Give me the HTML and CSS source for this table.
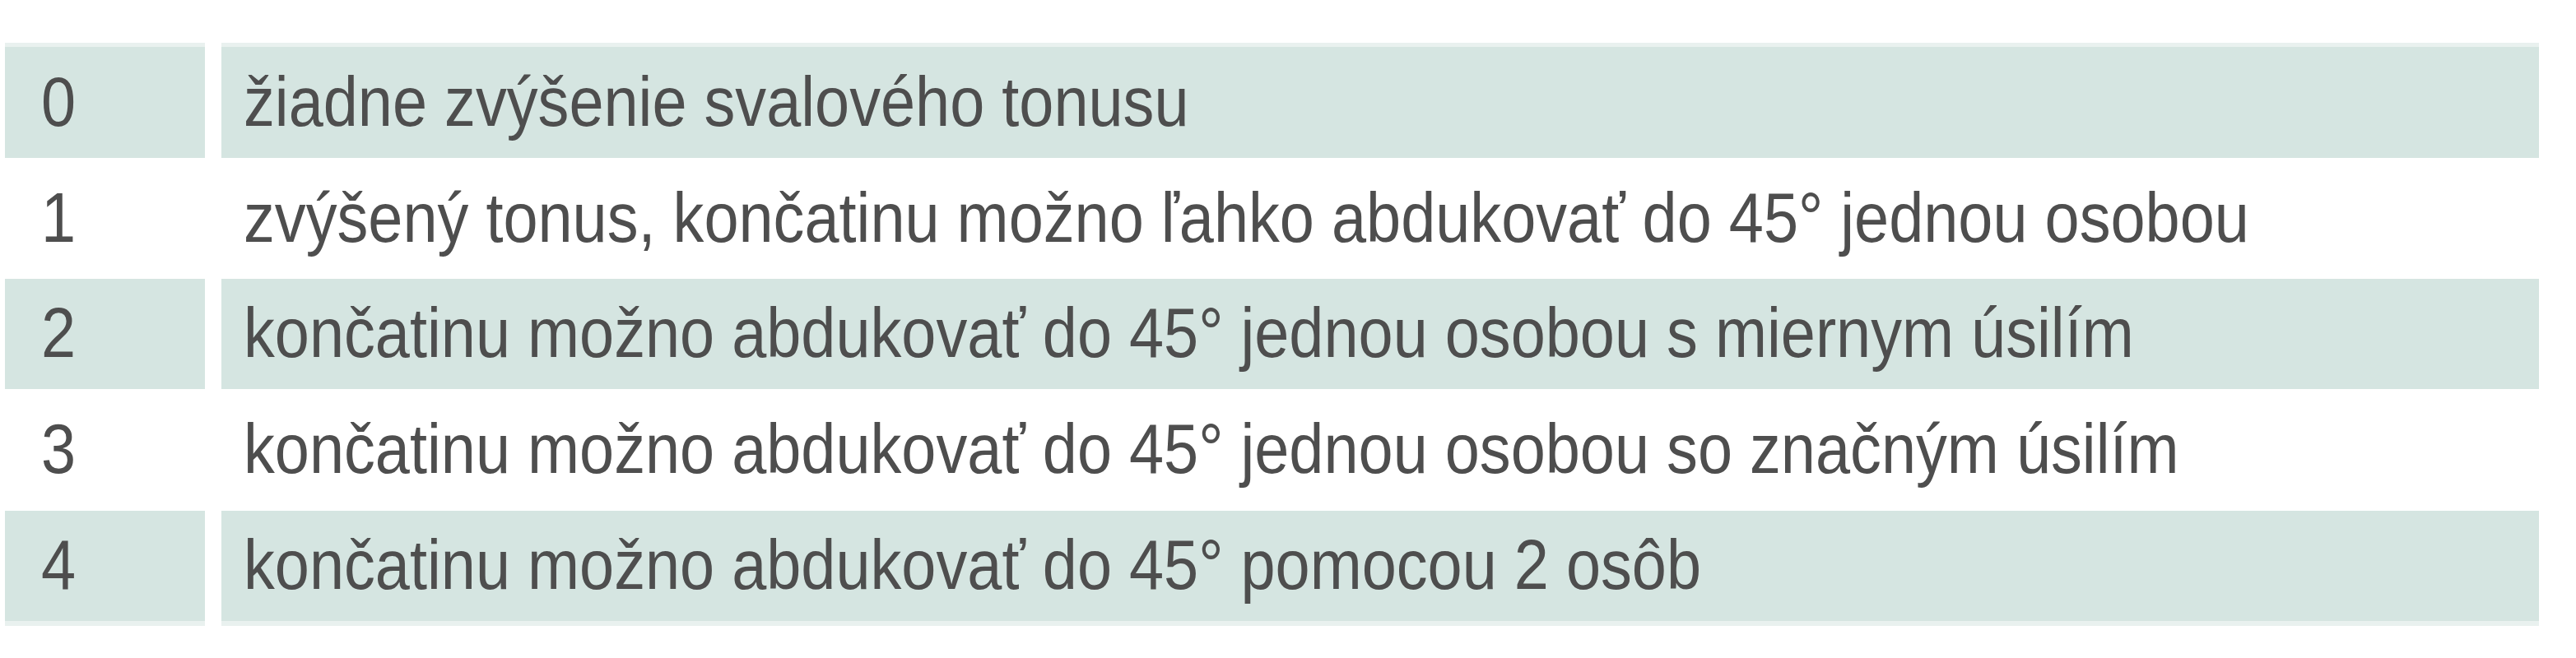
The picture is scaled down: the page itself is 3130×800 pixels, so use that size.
FILE: index.html
```html
<!DOCTYPE html>
<html lang="sk">
<head>
<meta charset="utf-8">
<title>Stupnica</title>
<link rel="stylesheet" href="styles.css">
</head>
<body>
<div class="scale">
  <div class="cell num shade first"><span class="t">0</span></div>
  <div class="cell desc shade first"><span class="t">žiadne zvýšenie svalového tonusu</span></div>
  <div class="cell num"><span class="t">1</span></div>
  <div class="cell desc"><span class="t">zvýšený tonus, končatinu možno ľahko abdukovať do 45° jednou osobou</span></div>
  <div class="cell num shade"><span class="t">2</span></div>
  <div class="cell desc shade"><span class="t">končatinu možno abdukovať do 45° jednou osobou s miernym úsilím</span></div>
  <div class="cell num"><span class="t">3</span></div>
  <div class="cell desc"><span class="t">končatinu možno abdukovať do 45° jednou osobou so značným úsilím</span></div>
  <div class="cell num shade last"><span class="t">4</span></div>
  <div class="cell desc shade last"><span class="t">končatinu možno abdukovať do 45° pomocou 2 osôb</span></div>
</div>
</body>
</html>
```

FILE: styles.css
```css
html, body {
  background: #ffffff;
}
body {
  margin: 52px 0 0 6px;
  font-family: "Liberation Sans", Arial, sans-serif;
  color: #4e4e4e;
}
.scale {
  display: grid;
  grid-template-columns: 243px 2816px;
  grid-template-rows: 140px 147px 134px 148px 140px;
  column-gap: 20px;
}
.cell {
  display: flex;
  align-items: center;
  font-size: 86px;
  line-height: 1;
  padding-bottom: 4px;
  white-space: nowrap;
  box-sizing: border-box;
}
.t {
  display: inline-block;
  transform: scaleX(0.88);
  transform-origin: 0 50%;
}
.num {
  padding-left: 44px;
}
.desc {
  padding-left: 27px;
}
.shade {
  background: #d5e5e1;
}
.first {
  border-top: 5px solid #e9f1ef;
}
.last {
  border-bottom: 6px solid #e9f1ef;
}
```
